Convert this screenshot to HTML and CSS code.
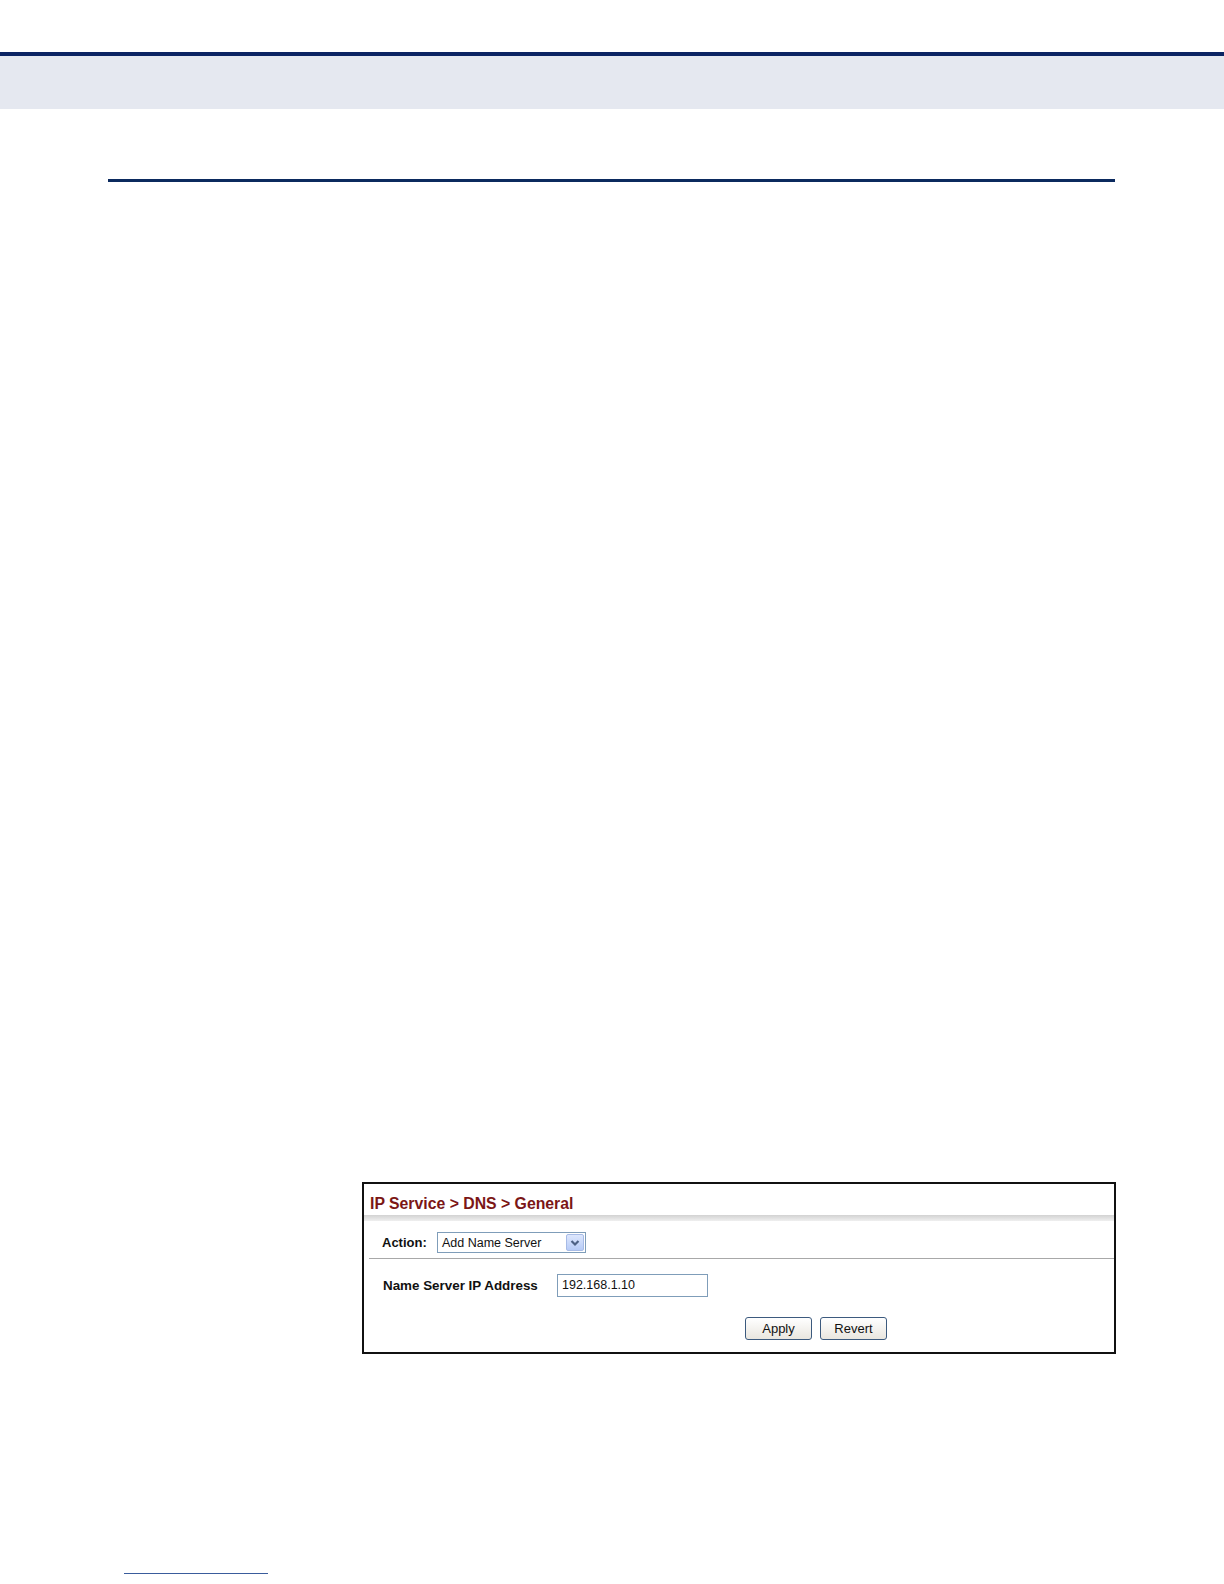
FILE: index.html
```html
<!DOCTYPE html>
<html>
<head>
<meta charset="utf-8">
<link rel="stylesheet" href="styles.css">
</head>
<body>
<div class="top-rule"></div>
<div class="band"></div>
<div class="section-rule"></div>
<div class="panel">
  <div class="panel-title">IP Service &gt; DNS &gt; General</div>
  <div class="title-shade"></div>
  <div class="action-row">
    <span class="label">Action:</span>
    <div class="select">
      <span class="select-text">Add Name Server</span>
      <span class="select-btn">
        <svg width="10" height="8" viewBox="0 0 10 8"><path d="M1.5 2 L5 5.5 L8.5 2" fill="none" stroke="#4d6185" stroke-width="2.2"/></svg>
      </span>
    </div>
  </div>
  <div class="separator"></div>
  <div class="field-row">
    <span class="label field-label">Name Server IP Address</span>
    <div class="input">192.168.1.10</div>
  </div>
  <div class="button-row">
    <div class="btn">Apply</div>
    <div class="btn">Revert</div>
  </div>
</div>
<div class="foot-rule"></div>
</body>
</html>
```

FILE: styles.css
```css
html, body {
  margin: 0;
  padding: 0;
  background: #ffffff;
  font-family: "Liberation Sans", Arial, sans-serif;
}
body {
  width: 1224px;
  height: 1584px;
  overflow: hidden;
}
.top-rule {
  margin-top: 52px;
  height: 4px;
  background: #0b2463;
}
.band {
  height: 53px;
  background: #e5e8f0;
}
.section-rule {
  margin: 70px 0 0 108px;
  width: 1007px;
  height: 3px;
  background: #0b2a5e;
}
.panel {
  margin: 1000px 0 0 362px;
  width: 750px;
  border: 2px solid #111111;
  padding-bottom: 12px;
}
.panel-title {
  height: 31px;
  line-height: 39px;
  padding-left: 6px;
  font-size: 15.8px;
  font-weight: bold;
  color: #7b1616;
}
.title-shade {
  height: 6px;
  background: linear-gradient(#d2d2d2, #efefef);
}
.action-row {
  display: flex;
  align-items: center;
  padding: 11px 0 5px 18px;
}
.label {
  font-size: 13px;
  font-weight: bold;
  color: #111111;
}
.action-row .label {
  width: 55px;
}
.select {
  width: 146px;
  height: 19px;
  border: 1px solid #7f9db9;
  background: #ffffff;
  display: flex;
  align-items: center;
  justify-content: space-between;
  padding: 0 1px 0 0;
}
.select-text {
  font-size: 12.5px;
  color: #111111;
  padding-left: 4px;
}
.select-btn {
  width: 18px;
  height: 17px;
  border: 1px solid #a7bbe6;
  border-radius: 2px;
  background: linear-gradient(#dde7fd, #b7cbf7);
  display: flex;
  align-items: center;
  justify-content: center;
  box-sizing: border-box;
}
.separator {
  margin-left: 5px;
  height: 1px;
  background: #a8a8a8;
}
.field-row {
  display: flex;
  align-items: center;
  margin-top: 15px;
  padding-left: 19px;
}
.field-label {
  width: 174px;
  font-size: 13.4px;
}
.input {
  width: 145px;
  height: 21px;
  line-height: 21px;
  border: 1px solid #7f9db9;
  padding-left: 4px;
  font-size: 12.5px;
  color: #111111;
}
.button-row {
  display: flex;
  gap: 8px;
  margin-top: 20px;
  padding-left: 381px;
}
.btn {
  width: 65px;
  height: 21px;
  line-height: 21px;
  border: 1px solid #3c5a7e;
  border-radius: 3px;
  background: linear-gradient(#ffffff, #e9e6df);
  text-align: center;
  font-size: 13px;
  color: #111111;
}
.foot-rule {
  margin: 219px 0 0 124px;
  width: 144px;
  height: 1px;
  background: #3a5c9c;
}
```
